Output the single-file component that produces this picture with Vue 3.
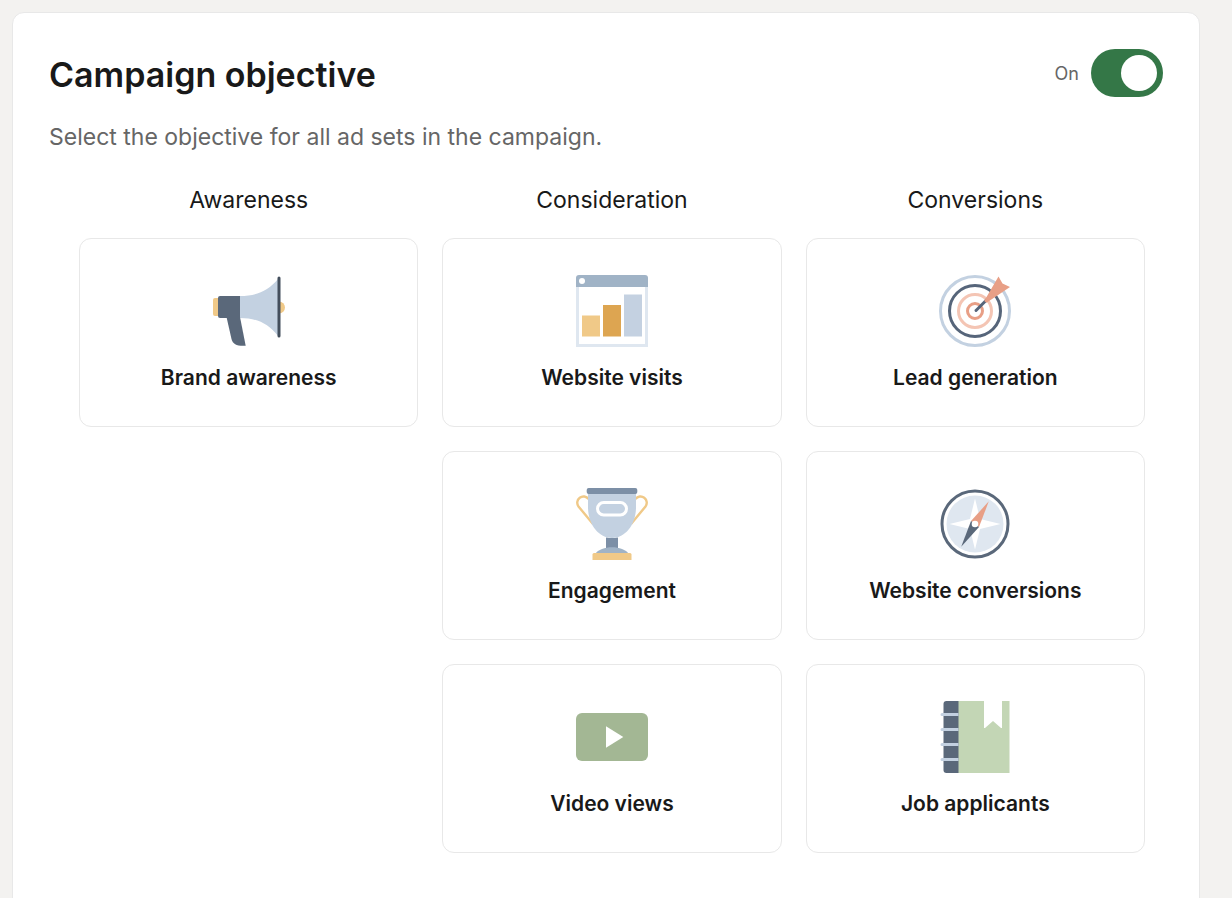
<template>
  <main class="panel">
    <header class="panel__header">
      <h1>Campaign objective</h1>
      <label class="switch">
        <span>{{ enabled ? 'On' : 'Off' }}</span>
        <input v-model="enabled" type="checkbox" role="switch" />
      </label>
    </header>
    <p class="panel__intro">Select the objective for all ad sets in the campaign.</p>

    <div class="columns">
      <section v-for="group in groups" :key="group.title" class="column">
        <h2>{{ group.title }}</h2>
        <button
          v-for="item in group.items"
          :key="item.icon"
          class="card"
          type="button"
          @click="selected = item.icon"
        >
          <svg v-if="item.icon === 'megaphone'" class="card__icon" viewBox="0 0 72 72" aria-hidden="true">
            <rect x="0" y="23" width="8" height="18" rx="2" fill="#f0c988" />
            <circle cx="66" cy="32.5" r="6" fill="#f0c988" />
            <path d="M27 21C43 21 55 16 65 4V61C55 48 43 43 27 43Z" fill="#c3d1e1" />
            <path d="M7 21H27V43H7Q5 43 5 41V23Q5 21 7 21Z" fill="#5a687a" />
            <path d="M13.5 42H27L32.7 70.7C24 71.2 20 69.5 18.5 64Z" fill="#5a687a" />
            <rect x="64.5" y="1.5" width="3" height="61" rx="1.5" fill="#434e5c" />
          </svg>
          <svg v-else-if="item.icon === 'chart'" class="card__icon" viewBox="0 0 72 72" aria-hidden="true">
            <path d="M1.5 10V70.5H70.5V10" fill="none" stroke="#dfe7f0" stroke-width="3" />
            <path d="M0 12V3Q0 0 3 0H69Q72 0 72 3V12Z" fill="#a0b3c6" />
            <circle cx="6" cy="6" r="3" fill="#fff" />
            <rect x="6" y="40.5" width="18" height="21" fill="#f0c988" />
            <rect x="27" y="30" width="18" height="31.5" fill="#dda551" />
            <rect x="48" y="19.5" width="18" height="42" fill="#c4d1e1" />
          </svg>
          <svg v-else-if="item.icon === 'target'" class="card__icon" viewBox="0 0 72 72" aria-hidden="true">
            <g fill="none" stroke-width="3">
              <circle cx="36" cy="36" r="34.5" stroke="#c3d1e1" />
              <circle cx="36" cy="36" r="25.5" stroke="#56657a" />
              <circle cx="36" cy="36" r="16.5" stroke="#f4c5b4" />
              <circle cx="36" cy="36" r="7.5" stroke="#e89f86" />
              <path d="M37 35.5L48 24.5" stroke="#56657a" stroke-linecap="round" />
            </g>
            <path d="M45.2 26L59.5 1.5L63.5 8.5L71 12L47.5 27.7Z" fill="#e89f86" />
          </svg>
          <svg v-else-if="item.icon === 'trophy'" class="card__icon" viewBox="0 0 72 72" aria-hidden="true">
            <path
              d="M17 36L2.5 18.5A6.2 6.2 0 0 1 12.5 11M55 36L69.5 18.5A6.2 6.2 0 0 0 59.5 11"
              fill="none"
              stroke="#f0c988"
              stroke-width="2.4"
            />
            <path d="M12 5H60V19C60 37 49 50 36 50S12 37 12 19Z" fill="#c3d1e1" />
            <rect x="10.7" y="0" width="50.6" height="6" rx="2" fill="#7c8fa6" />
            <rect x="21.5" y="14.5" width="29" height="12.5" rx="6.25" fill="none" stroke="#fff" stroke-width="3" />
            <path d="M30 49.5Q36 50.5 42 49.5V60H30Z" fill="#7c8fa6" />
            <path d="M19 66C25 57 47 57 53 66Z" fill="#a0b3c6" />
            <path d="M16.5 72V66.5Q16.5 65 18 65H54Q55.5 65 55.5 66.5V72Z" fill="#f0c988" />
          </svg>
          <svg v-else-if="item.icon === 'compass'" class="card__icon" viewBox="0 0 72 72" aria-hidden="true">
            <circle cx="36" cy="36" r="33" fill="none" stroke="#5a687a" stroke-width="3" />
            <circle cx="36" cy="36" r="28.5" fill="#dfe7f0" />
            <path d="M36 10.5L41 31L61.5 36L41 41L36 61.5L31 41L10.5 36L31 31Z" fill="#fff" />
            <path d="M49.8 13.3L40 39L32 33Z" fill="#e89f86" />
            <path d="M22.2 58.7L32 33L40 39Z" fill="#5a687a" />
            <circle cx="36" cy="36" r="3.3" fill="#fff" />
          </svg>
          <svg v-else-if="item.icon === 'video'" class="card__icon" viewBox="0 0 72 72" aria-hidden="true">
            <rect x="0" y="12" width="72" height="48" rx="6" fill="#a3b794" />
            <path d="M30 25.3L47.3 36L30 46.7Z" fill="#fff" />
          </svg>
          <svg v-else class="card__icon" viewBox="0 0 72 72" aria-hidden="true">
            <path d="M7.5 0H20V72H7.5Q4.5 72 4.5 69V3Q4.5 0 7.5 0Z" fill="#5a687a" />
            <path d="M19.5 0H70.5V72H19.5Z" fill="#c3d6b5" />
            <path d="M45 0H63V27H62L54 20L46 27H45Z" fill="#fff" />
            <path
              d="M3 13.5H19.5M3 28.5H19.5M3 43.5H19.5M3 58.5H19.5"
              stroke="#c3d1e1"
              stroke-width="3"
            />
            <path d="M3 13.5H4M3 28.5H4M3 43.5H4M3 58.5H4" stroke="#c3d1e1" stroke-width="3" stroke-linecap="round" />
          </svg>
          <span>{{ item.label }}</span>
        </button>
      </section>
    </div>
  </main>
</template>

<script setup>
import { ref } from 'vue'

const enabled = ref(true)
const selected = ref('')

const groups = [
  {
    title: 'Awareness',
    items: [{ icon: 'megaphone', label: 'Brand awareness' }]
  },
  {
    title: 'Consideration',
    items: [
      { icon: 'chart', label: 'Website visits' },
      { icon: 'trophy', label: 'Engagement' },
      { icon: 'video', label: 'Video views' }
    ]
  },
  {
    title: 'Conversions',
    items: [
      { icon: 'target', label: 'Lead generation' },
      { icon: 'compass', label: 'Website conversions' },
      { icon: 'notebook', label: 'Job applicants' }
    ]
  }
]
</script>

<style>
body {
  background: #f3f2f0;
}
</style>

<style scoped>
.panel {
  margin: 12px 32px 0 12px;
  padding: 36px 36px 72px;
  border: 1px solid #e8e8e8;
  border-radius: 12px;
  background: #ffffff;
  color: #191919;
  font-family: Inter, 'Liberation Sans', sans-serif;
}

.panel__header {
  display: flex;
  align-items: flex-start;
  justify-content: space-between;
}

h1 {
  margin: 0;
  font-size: 34px;
  font-weight: 600;
  line-height: 52px;
}

.switch {
  display: flex;
  align-items: center;
  gap: 12px;
  color: #666666;
  font-size: 18px;
  cursor: pointer;
}

.switch input {
  display: flex;
  align-items: center;
  width: 72px;
  height: 48px;
  margin: 0;
  padding: 6px;
  box-sizing: border-box;
  border-radius: 24px;
  background: #666666;
  appearance: none;
  cursor: pointer;
}

.switch input::before {
  content: '';
  width: 36px;
  height: 36px;
  border-radius: 50%;
  background: #ffffff;
}

.switch input:checked {
  justify-content: flex-end;
  background: #347747;
}

.panel__intro {
  margin: 20px 0 0;
  color: #666666;
  font-size: 23px;
  line-height: 32px;
}

.columns {
  display: grid;
  grid-template-columns: repeat(3, 1fr);
  gap: 24px;
  margin-top: 33px;
  padding: 0 18px 0 30px;
}

.column {
  display: flex;
  flex-direction: column;
  gap: 24px;
}

h2 {
  margin: 0;
  font-size: 23px;
  font-weight: 400;
  line-height: 28px;
  text-align: center;
}

.card {
  display: flex;
  flex-direction: column;
  align-items: center;
  gap: 17px;
  padding: 36px 12px 34px;
  border: 1px solid #e8e8e8;
  border-radius: 12px;
  background: #ffffff;
  color: inherit;
  font: inherit;
  font-size: 21px;
  font-weight: 600;
  line-height: 28px;
  cursor: pointer;
}

.card__icon {
  width: 72px;
  height: 72px;
}
</style>
